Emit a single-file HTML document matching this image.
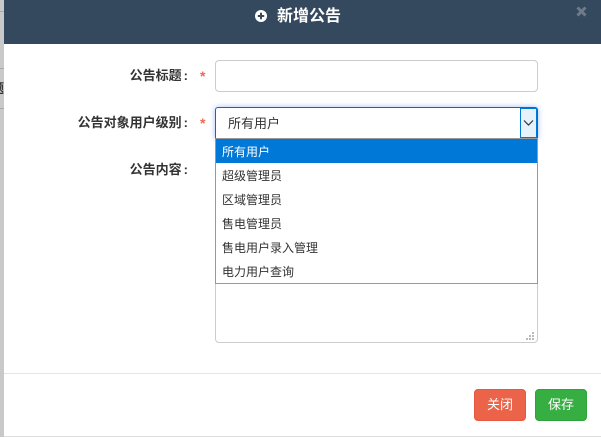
<!DOCTYPE html>
<html><head><meta charset="utf-8">
<style>
html,body{margin:0;padding:0;width:601px;height:437px;overflow:hidden;background:#fff;font-family:"Liberation Sans","Noto Sans CJK SC",sans-serif;}
div,span{position:absolute;box-sizing:border-box;white-space:nowrap}
.lb{font-size:13px;font-weight:bold;color:#333;line-height:18px;text-align:right;right:413px}
.lb b{padding-left:2px}
.st{font-size:14px;color:#ec6a58;left:200px;line-height:18px;font-weight:bold}
.o{left:1px;right:1px;height:24px;line-height:26px;font-size:12px;color:#333;padding-left:6px}
</style></head><body>
<div style="left:0;top:0;width:4px;height:437px;background:#c9c9c9"></div>
<div style="left:0;top:11px;width:4px;height:1px;background:#aaa"></div>
<div style="left:0;top:68px;width:4px;height:1px;background:#aaa"></div>
<div style="left:0;top:108px;width:4px;height:1px;background:#aaa"></div>
<div style="left:-9px;top:80px;font-size:13px;font-weight:bold;color:#333;line-height:18px;width:13px;overflow:hidden">题</div>
<div style="left:4px;top:0;width:597px;height:437px;background:#fff"></div>
<div style="left:4px;top:0;width:597px;height:44px;background:#34495e"></div>
<svg style="position:absolute;left:255px;top:10px" width="12" height="12" viewBox="0 0 12 12"><circle cx="6" cy="6" r="6" fill="#fff"/><path d="M6 2.8v6.4M2.8 6h6.4" stroke="#34495e" stroke-width="2"/></svg>
<div style="left:277px;top:5px;font-size:16px;font-weight:bold;color:#fff;line-height:23px">新增公告</div>
<svg style="position:absolute;left:576px;top:6px" width="11" height="11" viewBox="0 0 11 11"><path d="M1.5 1.5l8 8M9.5 1.5l-8 8" stroke="#6d7b8a" stroke-width="3"/></svg>

<div class="lb" style="top:67px">公告标题<b>:</b></div>
<div class="st" style="top:67px">*</div>
<div style="left:215px;top:60px;width:323px;height:32px;border:1px solid #ccc;border-radius:4px;background:#fff"></div>

<div class="lb" style="top:114px">公告对象用户级别<b>:</b></div>
<div class="st" style="top:114px">*</div>
<div class="lb" style="top:161px">公告内容<b>:</b></div>

<div style="left:215px;top:140px;width:323px;height:203px;border:1px solid #ccc;border-radius:4px;background:#fff"></div>
<svg style="position:absolute;left:525px;top:331px" width="10" height="10"><path d="M7 1h2v2H7zM4 4h2v2H4zM7 4h2v2H7zM1 7h2v2H1zM4 7h2v2H4zM7 7h2v2H7z" fill="#bbb"/></svg>

<div style="left:215px;top:107px;width:323px;height:32px;border:1px solid #1a62c8;border-radius:3px 3px 0 0;background:#fff;box-shadow:0 0 6px rgba(60,110,230,.45)"></div>
<div style="left:228px;top:114px;font-size:13px;color:#333;line-height:20px">所有用户</div>
<div style="left:520px;top:108px;width:17px;height:30px;background:#e5f1fb;border:1px solid #0078d7"></div>
<svg style="position:absolute;left:523px;top:119px" width="11" height="8"><path d="M1 1.5l4.5 4.5 4.5-4.5" fill="none" stroke="#333" stroke-width="1.2"/></svg>

<div style="left:215px;top:138px;width:323px;height:146px;border:1px solid #999;background:#fff">
<div style="left:0;right:0;top:0;height:24px;background:#0078d7"></div>
<div class="o" style="left:0;top:0;color:#fff">所有用户</div>
<div class="o" style="left:0;top:24px">超级管理员</div>
<div class="o" style="left:0;top:48px">区域管理员</div>
<div class="o" style="left:0;top:72px">售电管理员</div>
<div class="o" style="left:0;top:96px">售电用户录入管理</div>
<div class="o" style="left:0;top:120px">电力用户查询</div>
</div>

<div style="left:4px;top:373px;width:597px;height:1px;background:#e5e5e5"></div>
<div style="left:474px;top:389px;width:52px;height:32px;background:#eb6349;border:1px solid #e8573f;border-radius:4px;color:#fff;font-size:13px;line-height:30px;text-align:center">关闭</div>
<div style="left:535px;top:389px;width:52px;height:32px;background:#37ae42;border:1px solid #2fa23b;border-radius:4px;color:#fff;font-size:13px;line-height:30px;text-align:center">保存</div>
<div style="left:4px;top:436px;width:597px;height:1px;background:#ddd"></div>
</body></html>
